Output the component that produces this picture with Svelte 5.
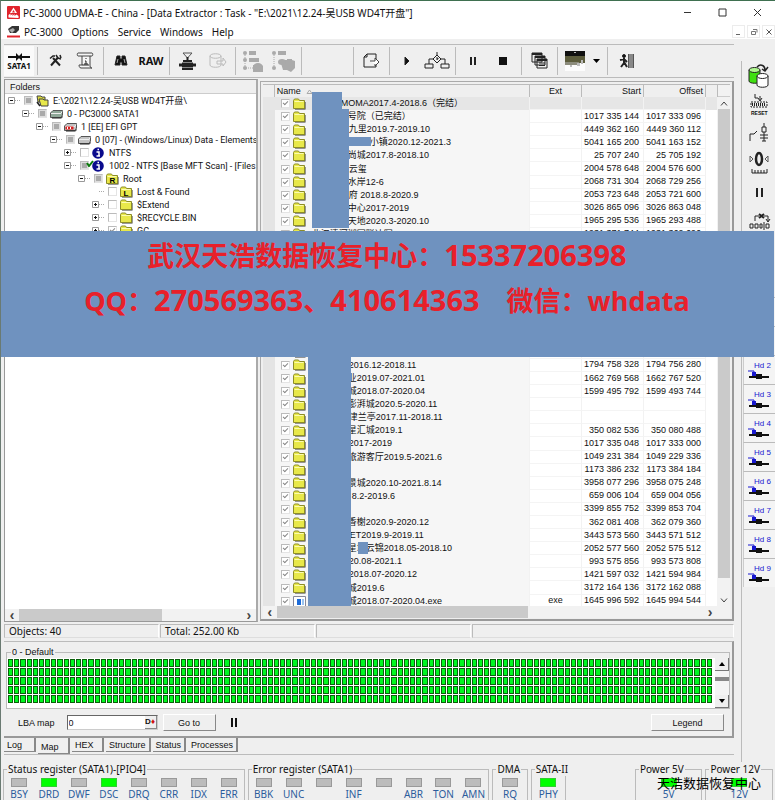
<script>
    const menus = ['PC-3000', 'Options', 'Service', 'Windows', 'Help'];

    const tree = [
        { level: 0, open: true, check: 'part', icon: 'stack', text: 'E:\\2021\\12.24-吴USB WD4T开盘\\' },
        { level: 1, open: true, check: 'part', icon: 'disk', text: '0 - PC3000 SATA1' },
        { level: 2, open: true, check: 'part', icon: 'gpt', text: '1 [EE] EFI GPT' },
        { level: 3, open: true, check: 'part', icon: 'drive', text: '0 [07] - (Windows/Linux) Data - Elements' },
        { level: 4, open: false, check: 'off', icon: 'info', text: 'NTFS' },
        { level: 4, open: true, check: 'part', icon: 'info', text: '1002 - NTFS [Base MFT Scan] - [Files -', mark: true },
        { level: 5, open: true, check: 'part', icon: 'folder', letter: 'R', text: 'Root' },
        { level: 6, open: null, check: 'off', icon: 'folder', letter: 'L', text: 'Lost & Found' },
        { level: 6, open: false, check: 'off', icon: 'folder', text: '$Extend' },
        { level: 6, open: false, check: 'off', icon: 'folder', text: '$RECYCLE.BIN' },
        { level: 6, open: false, check: 'on', icon: 'folder', text: 'GC' }
    ];

    // skip = width of the hidden part of the name
    const files = [
        { skip: 29, name: 'MOMA2017.4-2018.6（完结）', start: '', offset: '' },
        { skip: 36, name: '号院（已完结）', start: '1017 335 144', offset: '1017 333 096' },
        { skip: 37, name: '九里2019.7-2019.10', start: '4449 362 160', offset: '4449 360 112' },
        { skip: 58, name: '小镇2020.12-2021.3', start: '5041 165 200', offset: '5041 163 152' },
        { skip: 36, name: '尚城2017.8-2018.10', start: '25 707 240', offset: '25 705 192' },
        { skip: 37, name: '云玺', start: '2004 578 648', offset: '2004 576 600' },
        { skip: 36, name: '水岸12-6', start: '2068 731 304', offset: '2068 729 256' },
        { skip: 37, name: '府 2018.8-2020.9', start: '2053 723 648', offset: '2053 721 600' },
        { skip: 36, name: '中心2017-2019', start: '3026 865 096', offset: '3026 863 048' },
        { skip: 36, name: '天地2020.3-2020.10', start: '1965 295 536', offset: '1965 293 488' },
        { skip: 0, name: '北汉清河湖园联达写2018.10-2019.10', start: '1931 371 744', offset: '1931 369 696' },
        ...Array.from({ length: 9 }, () => ({ skip: 0, name: '', start: '', offset: '' })),
        { skip: 37, name: '2016.12-2018.11', start: '1794 758 328', offset: '1794 756 280' },
        { skip: 36, name: '业2019.07-2021.01', start: '1662 769 568', offset: '1662 767 520' },
        { skip: 36, name: '城2018.07-2020.04', start: '1599 495 792', offset: '1599 493 744' },
        { skip: 36, name: '澎湃城2020.5-2020.11', start: '', offset: '' },
        { skip: 37, name: '津兰亭2017.11-2018.11', start: '', offset: '' },
        { skip: 36, name: '星汇城2019.1', start: '350 082 536', offset: '350 080 488' },
        { skip: 37, name: '2017-2019', start: '1017 335 048', offset: '1017 333 000' },
        { skip: 36, name: '旅游客厅2019.5-2021.6', start: '1049 231 384', offset: '1049 229 336' },
        { skip: 36, name: '', start: '1173 386 232', offset: '1173 384 184' },
        { skip: 36, name: '景城2020.10-2021.8.14', start: '3958 077 296', offset: '3958 075 248' },
        { skip: 40, name: '8.2-2019.6', start: '659 006 104', offset: '659 004 056' },
        { skip: 36, name: '', start: '3399 855 752', offset: '3399 853 704' },
        { skip: 36, name: '香榭2020.9-2020.12', start: '362 081 408', offset: '362 079 360' },
        { skip: 38, name: 'ET2019.9-2019.11', start: '3443 573 560', offset: '3443 571 512' },
        { skip: 36, name: '星城云锦2018.05-2018.10', start: '2052 577 560', offset: '2052 575 512' },
        { skip: 37, name: '20.08-2021.1', start: '993 575 856', offset: '993 573 808' },
        { skip: 37, name: '2018.07-2020.12', start: '1421 597 032', offset: '1421 594 984' },
        { skip: 36, name: '城2019.6', start: '3172 164 136', offset: '3172 162 088' },
        { skip: 36, name: '城2018.07-2020.04.exe', ext: 'exe', start: '1645 996 592', offset: '1645 994 544' }
    ];

    const cells = Array(114 * 5).fill(0);
    const tabs = ['Log', 'Map', 'HEX', 'Structure', 'Status', 'Processes'];
    let activeTab = $state('Map');
    let lba = $state('0');

    const heads = ['Hd 0', 'Hd 1', 'Hd 2', 'Hd 3', 'Hd 4', 'Hd 5', 'Hd 6', 'Hd 7', 'Hd 8', 'Hd 9'];
    const sideTools = ['copy', 'reset', 'power', 'zero', 'pause', 'bus', 'blank', 'blank'];

    const statusBits = ['BSY', 'DRD', 'DWF', 'DSC', 'DRQ', 'CRR', 'IDX', 'ERR'];
    const errorBits = ['BBK', 'UNC', '', 'INF', '', 'ABR', 'TON', 'AMN'];
    const lit = ['DRD', 'DSC', 'PHY', '5V', '12V'];
</script>

{#snippet logo()}
    <svg width="13" height="13" viewBox="0 0 13 13">
        <rect width="13" height="13" rx="1" fill="#e0242c" />
        <path d="M6.5 1.5 10 7H3z" fill="#fff" />
        <path d="M6.5 4 8 6.4H5z" fill="#e0242c" />
        <path d="M1.5 11.500V9l2-1.500v2l2-1.500v2l2-2v2l2-1.500 2 1.500v2z" fill="#fff" />
    </svg>
{/snippet}

{#snippet folder(letter)}
    <svg width="13" height="12" viewBox="0 0 13 12">
        <path d="M2 4h10.500v7.500H2z" fill="#333" />
        <path d="M.5 10.500V2.500l1-1.500h4l1 1.500h5v8z" fill="#e8e84a" stroke="#8c8c28" />
        <path d="M1.500 3.500h9" stroke="#fbfbb0" />
        {#if letter}
            <text x="3.500" y="9.500" font-size="8" font-weight="bold" font-family="Liberation Sans, sans-serif">{letter}</text>
        {/if}
    </svg>
{/snippet}

{#snippet treeIcon(kind, letter)}
    {#if kind === 'folder'}
        {@render folder(letter)}
    {:else if kind === 'stack'}
        <svg width="13" height="12" viewBox="0 0 13 12">
            <path d="M1 1h4l1 1h3v5H2z" fill="#d8d83c" stroke="#444" />
            <path d="M3 4h4l1 1h4v6H5z" fill="#e8e84a" stroke="#444" />
            <path d="M1 7l3 4" stroke="#222" stroke-width="1.500" />
        </svg>
    {:else if kind === 'info'}
        <svg width="12" height="12" viewBox="0 0 12 12">
            <circle cx="6" cy="6" r="5.800" fill="#0a0a8c" />
            <path d="M4.500 5H7v4h1M4.500 9H8M5.500 2.500H7" stroke="#fff" stroke-width="1.500" fill="none" />
        </svg>
    {:else}
        <svg width="13" height="10" viewBox="0 0 13 10">
            <path d="M.5 4 3 1.500h9.500V6L11 8.500H.5z" fill={kind === 'disk' ? '#8fa898' : '#c4c4c4'} stroke="#555" />
            <path d="M1 4.500h10l1-2" stroke="#eee" fill="none" />
            <path d="M2 9h9.500l1-1.500" stroke="#222" fill="none" />
            {#if kind === 'gpt'}
                <path d="M1.500 4.500h8v3h-8z" fill="#d82020" />
                <path d="M3.500 5v2M6.500 5v2" stroke="#fff" />
            {/if}
        </svg>
    {/if}
{/snippet}

{#snippet barIcon(kind)}
    <svg width="26" height="26" viewBox="0 0 26 26" fill="none" stroke="#222">
        {#if kind === 'tools'}
            <path d="M9 17.500 16 9.500M11 10l7 7.500" stroke-width="2" />
            <path d="M8 10.500l3-2.500h2M14 7l2 3 3 1M18 7l1 3" stroke-width="1.500" />
        {:else if kind === 'script'}
            <path d="M6 5h14c1 0 1 3 0 3h-2v10c0 2 2 2 2 2H9c-2 0-2-3-2-3h3V8H6c-1 0-1-3 0-3zM10 8h8" fill="#f6f6f6" stroke="#444" />
            <path d="M10 17h7M14 10v1M13 13h1v3M12 16h4" />
        {:else if kind === 'find'}
            <path d="M9 8h3v3h2V8h3l2 9h-5v-3h-2v3H7z" fill="#111" />
            <path d="M10 11l-1 4M16 11l1 4" stroke="#aaa" />
        {:else if kind === 'press'}
            <path d="M9 5h9l-4.500 5z" stroke="#555" />
            <path d="M13.500 9v5M9 13h9" stroke-width="2" />
            <path d="M5 17h17" stroke-width="3" />
            <path d="M8 17h11" stroke-width="5" />
            <path d="M8 21h11" stroke-width="2" />
        {:else if kind === 'cyl'}
            <path d="M6 8c0-3 11-3 11 0v9c0 3-11 3-11 0zM6 8c0 3 11 3 11 0M13 13h6v-3l3 4-3 4v-2h-6z" stroke="#bbb" />
        {:else if kind === 'tree1'}
            <g fill="#aaa" stroke="none">
                <circle cx="5" cy="5" r="2" /><circle cx="5" cy="12" r="2" /><circle cx="5" cy="20" r="2" />
                <path d="M9 3h7v4H9zM9 10h10v4H9zM13 17h6l4 1v6H13z" />
                <ellipse cx="18" cy="19" rx="5" ry="4" />
            </g>
            <path d="M5 5v15h8" stroke="#aaa" stroke-dasharray="1 1" />
        {:else if kind === 'tree2'}
            <g fill="#aaa" stroke="none">
                <circle cx="4" cy="5" r="2" /><path d="M8 3h8v4H8z" />
                <circle cx="4" cy="20" r="2" />
                <path d="M10 12h7v-1h5v1l3 1v7l-4 4-4-2h-4z" />
                <ellipse cx="12" cy="14" rx="4" ry="3" />
            </g>
            <path d="M4 5v15" stroke="#aaa" stroke-dasharray="1 1" />
        {:else if kind === 'export'}
            <path d="M18 12V6h-9L6 9v10h12v-3M9 6v3H6" />
            <path d="M12 13h5v-3l4 4-4 4v-2" stroke="#444" fill="#fff" />
        {:else if kind === 'play'}
            <path d="M11 9v8l4-4z" fill="#111" />
        {:else if kind === 'flow'}
            <path d="M13 4v3M13 7l4 4-4 4-4-4zM9 11H5v5M17 11h4v5M1 16h8v4H1zM17 16h8v4h-8z" />
            <path d="M12 10h2v1h-1v1" />
        {:else if kind === 'pause'}
            <path d="M11 9v8M15 9v8" stroke-width="2" />
        {:else if kind === 'stop'}
            <path d="M9 9h8v8H9z" fill="#111" stroke="none" />
        {:else if kind === 'windows'}
            <path d="M6 5h10v9H6zM9 8h10v9H9zM11 11h10v9H11z" fill="#eee" />
            <path d="M6 6h10M9 9h10M11 12h10" stroke-width="2" />
            <path d="M13 15h6M13 17.500h6" />
        {:else if kind === 'picture'}
            <g stroke="none">
                <path d="M3 3h20v20H3z" fill="#fcfcfc" />
                <path d="M3 3h20v6H3z" fill="#111" />
                <path d="M3 8h20v7H3z" fill="#5c5c3c" />
                <path d="M3 14h14v3H3z" fill="#8c8c7c" />
                <path d="M12 4h2v1h-2zM19 12h2v4h-2zM8 17h2v2H8zM15 15h3v3h-3z" fill="#bbb" />
            </g>
        {:else if kind === 'exit'}
            <path d="M17 6h4v14h-4z" fill="#888" stroke="none" />
            <path d="M16.500 6v14M21.500 6v14" stroke="#555" />
            <circle cx="12" cy="8" r="1.500" fill="#111" />
            <path d="M12 10v5l-3 4M12 14l3 5M8 12l4-1 3 3" stroke-width="2" />
        {/if}
    </svg>
{/snippet}

{#snippet tool(kind, label)}
    <button class="tool" aria-label={label}>{@render barIcon(kind)}</button>
{/snippet}

{#snippet sideIcon(kind)}
    <svg width="26" height="26" viewBox="0 0 26 26" fill="none" stroke="#222">
        {#if kind === 'copy'}
            <path d="M3 7v11c0 3 11 3 11 0V7" fill="#3fe010" />
            <ellipse cx="8.500" cy="7" rx="5.500" ry="2.500" fill="#b0f890" />
            <path d="M11 13v9c0 3 11 3 11 0v-9" fill="#fff" />
            <ellipse cx="16.500" cy="13" rx="5.500" ry="2.500" fill="#fff" />
            <path d="M11 4c4-4 8-1 8 3M16 6l3 2 3-4" stroke-width="1.500" />
        {:else if kind === 'reset'}
            <path d="M9 2v4h3M14 4v4M12 6l2 3 2-3" />
            <path d="M5 10h16v5H5z" stroke-dasharray="2 1" />
            <path d="M6 12.500h14" stroke-width="3" stroke-dasharray="1 1" />
            <text x="5" y="23" font-size="5" font-weight="bold" font-family="Liberation Sans, sans-serif" fill="#111" stroke="none">RESET</text>
        {:else if kind === 'power'}
            <path d="M18 2v4M16 6h4v5h-4zM18 11v9M14 14h8M14 17h8M16 20h4M4 20v-7h4l3-3" />
        {:else if kind === 'zero'}
            <ellipse cx="13" cy="9" rx="3" ry="6" stroke-width="2.500" />
            <path d="M4 6v6l3-3zM22 6v6l-3-3z" stroke="#555" />
            <path d="M6 19v4h15v-4M9 20v3M12 20v3M15 20v3M18 20v3" />
        {:else if kind === 'pause'}
            <path d="M11 9v9M16 9v9" stroke-width="2" />
        {:else if kind === 'bus'}
            <path d="M9 13V8h4M18 8h4v5M20 11l2 3 2-3" />
            <path d="M13 6l5 4M18 6l-5 4" stroke-width="2" />
            <path d="M4 16h3v4H4zM9 16h3v4H9zM14 16h2v4h-2zM20 16h3v4h-3zM18 14v8" />
        {/if}
    </svg>
{/snippet}

{#snippet led(name)}
    <div class="led-item">
        <span class="led" class:on={lit.includes(name)}></span>
        <span class="led-name">{name}</span>
    </div>
{/snippet}

<div class="window">
    <header class="titlebar">
        {@render logo()}
        <span class="title">PC-3000 UDMA-E - China - [Data Extractor : Task - "E:\2021\12.24-吴USB WD4T开盘"]</span>
        <div class="win-buttons">
            <button aria-label="Minimize"><svg width="9" height="9"><path d="M1 4.500h7" stroke="#333" /></svg></button>
            <button aria-label="Maximize"><svg width="9" height="9"><path d="M1 1h7v7H1z" fill="none" stroke="#333" /></svg></button>
            <button aria-label="Close"><svg width="9" height="9"><path d="M1 1l7 7M8 1l-7 7" stroke="#333" /></svg></button>
        </div>
    </header>

    <nav class="menubar">
        <svg width="13" height="13" viewBox="0 0 13 13">
            <path d="M1 4l4-3h7v4l-3 3H3z" fill="#333" />
            <path d="M2 5l4-2 2 2-3 3z" fill="#aaa" />
            <path d="M0 11.500h13" stroke="#e0242c" stroke-width="2" />
        </svg>
        {#each menus as menu}
            <button>{menu}</button>
        {/each}
        <div class="mdi-buttons">
            <button aria-label="Minimize child"><svg width="8" height="8"><path d="M1 6.500h4" stroke="#666" /></svg></button>
            <button aria-label="Restore child"><svg width="8" height="8"><path d="M3 1.500h4v3M1.500 3.500h4v3h-4z" fill="none" stroke="#777" /></svg></button>
            <button aria-label="Close child"><svg width="8" height="8"><path d="M1.500 1.500l5 5M6.500 1.500l-5 5" stroke="#555" /></svg></button>
        </div>
    </nav>

    <div class="workspace">
        <div class="main">
            <div class="toolbar">
                <button class="tool pressed">
                    <svg width="22" height="10" viewBox="0 0 22 10">
                        <path d="M0 5h22" stroke="#111" stroke-width="2" />
                        <path d="M8 1v8l4-4zM14 1v8l-4-4z" fill="#111" />
                    </svg>
                    <b>SATA1</b>
                </button>
                <i class="sep"></i>
                {@render tool('tools', 'Tools')}
                {@render tool('script', 'Script')}
                <i class="sep"></i>
                {@render tool('find', 'Find')}
                <button class="tool raw"><b>RAW</b></button>
                <i class="sep"></i>
                {@render tool('press', 'Compress')}
                {@render tool('cyl', 'Copy disk')}
                <i class="sep"></i>
                {@render tool('tree1', 'Expand')}
                {@render tool('tree2', 'Collapse')}
                <i class="sep"></i>
                <i class="space"></i>
                <i class="sep"></i>
                {@render tool('export', 'Export')}
                <i class="sep"></i>
                {@render tool('play', 'Start')}
                {@render tool('flow', 'Scheme')}
                <i class="sep"></i>
                {@render tool('pause', 'Pause')}
                {@render tool('stop', 'Stop')}
                <i class="sep"></i>
                {@render tool('windows', 'Windows')}
                <i class="sep"></i>
                {@render tool('picture', 'Map view')}
                <button class="caret" aria-label="Map view options"><svg width="8" height="4"><path d="M0 0h7L3.500 4z" /></svg></button>
                <i class="sep"></i>
                {@render tool('exit', 'Exit')}
            </div>

            <div class="panels">
                <section class="folders">
                    <h2>Folders</h2>
                    <ul>
                        {#each tree as node}
                            <li style:padding-left="{3 + node.level * 14}px">
                                {#if node.open === null}
                                    <span class="toggle none"></span>
                                {:else}
                                    <button class="toggle" aria-label="Toggle {node.text}">
                                        <svg width="7" height="7"><path d="M.5.5h6v6h-6z" fill="#fff" stroke="#999" /><path d={node.open ? 'M2 3.500h3' : 'M2 3.500h3M3.500 2v3'} stroke="#111" /></svg>
                                    </button>
                                {/if}
                                <i class="dots"></i>
                                <label>
                                    <input type="checkbox" class={node.check} checked={node.check === 'on'} />
                                    {#if node.mark}
                                        <svg class="mark" width="8" height="7"><path d="M1 3l2 3 4-5" fill="none" stroke="#0a7a0a" stroke-width="2" /></svg>
                                    {/if}
                                    <span class="icon">{@render treeIcon(node.icon, node.letter)}</span>
                                    <span>{node.text}</span>
                                </label>
                            </li>
                        {/each}
                    </ul>
                    <div class="hscroll">
                        <button aria-label="Scroll left">‹</button>
                        <div class="track"><div class="thumb tree-thumb"></div></div>
                        <button aria-label="Scroll right">›</button>
                    </div>
                </section>

                <section class="files">
                    <div class="files-body">
                        <div class="clip">
                            <table>
                                <colgroup>
                                    <col class="c-gutter" /><col /><col class="c-ext" /><col class="c-num" /><col class="c-num" /><col class="c-rest" />
                                </colgroup>
                                <thead>
                                    <tr>
                                        <th></th>
                                        <th class="left">Name <svg width="7" height="5"><path d="M1 4.500 3.500 1 6 4.500z" fill="none" stroke="#aaa" /></svg></th>
                                        <th>Ext</th>
                                        <th class="right">Start</th>
                                        <th class="right">Offset</th>
                                        <th></th>
                                    </tr>
                                </thead>
                                <tbody>
                                    {#each files as file, i}
                                        <tr class:current={i === 0}>
                                            <td class="gutter"></td>
                                            <td class="name">
                                                <label>
                                                    <input type="checkbox" class="on" checked />
                                                    {#if file.ext}
                                                        <svg class="file-icon" width="13" height="12"><path d="M.5 1.500h12v10H.5z" fill="#fff" stroke="#889" /><path d="M4 4h4v6H4z" fill="#1c6ad8" /><path d="M9 4h2v6H9z" fill="#9cc4f0" /></svg>
                                                    {:else}
                                                        <span class="file-icon">{@render folder()}</span>
                                                    {/if}
                                                    <i style:width="{file.skip}px"></i>
                                                    <span>{file.name}</span>
                                                </label>
                                            </td>
                                            <td class="ext">{file.ext ?? ''}</td>
                                            <td class="num">{file.start}</td>
                                            <td class="num">{file.offset}</td>
                                            <td></td>
                                        </tr>
                                    {/each}
                                </tbody>
                            </table>
                            <div class="mask mask-head"></div>
                            <div class="mask mask-top"></div>
                            <div class="mask mask-bar"></div>
                            <div class="mask mask-low"></div>
                            <div class="mask mask-dot"></div>
                        </div>
                        <div class="vscroll">
                            <i class="cap"></i>
                            <button aria-label="Scroll up"><svg width="8" height="5"><path d="M1 4.500 4 1l3 3.500" /></svg></button>
                            <div class="vthumb"></div>
                            <button aria-label="Scroll down"><svg width="8" height="5"><path d="M1 .5 4 4 7 .5" /></svg></button>
                        </div>
                    </div>
                    <div class="hscroll">
                        <button aria-label="Scroll left">‹</button>
                        <div class="track"><div class="thumb file-thumb"></div></div>
                        <button aria-label="Scroll right">›</button>
                        <i class="corner"></i>
                    </div>
                </section>
            </div>

            <footer class="statusbar">
                <span>Objects: 40</span>
                <span>Total: 252.00 Kb</span>
                <span></span>
                <span class="wide"></span>
            </footer>

            <section class="map">
                <fieldset>
                    <legend>0 - Default</legend>
                    <div class="map-body">
                        <div class="cells">
                            {#each cells as _}<i></i>{/each}
                        </div>
                        <div class="map-scroll">
                            <button aria-label="Map up"><svg width="6" height="4"><path d="M0 4h6L3 0z" /></svg></button>
                            <div class="map-thumb"></div>
                            <button aria-label="Map down"><svg width="6" height="4"><path d="M0 0h6L3 4z" /></svg></button>
                        </div>
                    </div>
                </fieldset>
                <div class="map-tools">
                    <label for="lba">LBA map</label>
                    <div class="lba-box">
                        <input id="lba" bind:value={lba} />
                        <button aria-label="Number base">D<em>♦</em></button>
                    </div>
                    <button class="btn goto">Go to</button>
                    <button class="pause" aria-label="Pause map"><svg width="8" height="9"><path d="M2 0v9M6 0v9" stroke="#111" stroke-width="2" /></svg></button>
                    <button class="btn legend">Legend</button>
                </div>
            </section>

            <div class="tabs">
                {#each tabs as tab}
                    <button class:active={tab === activeTab} onclick={() => (activeTab = tab)}>{tab}</button>
                {/each}
            </div>
        </div>

        <aside class="side">
            {#each sideTools as kind}
                <button aria-label={kind}>{@render sideIcon(kind)}</button>
            {/each}
            <i class="gap"></i>
            {#each heads as head}
                <button class="head">
                    <span>{head}</span>
                    <svg width="22" height="10" viewBox="0 0 22 10">
                        <path d="M0 1h6v4" stroke="#1818d0" fill="none" />
                        <path d="M4 2h4v4H4z" fill="#1818d0" />
                        <path d="M1 7h20" stroke="#111" stroke-width="2" />
                        <path d="M8 4h6v5H8z" fill="#111" />
                    </svg>
                </button>
            {/each}
        </aside>
    </div>

    <div class="registers">
        <fieldset class="eight">
            <legend>Status register (SATA1)-[PIO4]</legend>
            {#each statusBits as bit}{@render led(bit)}{/each}
        </fieldset>
        <fieldset class="eight">
            <legend>Error register (SATA1)</legend>
            {#each errorBits as bit}{@render led(bit)}{/each}
        </fieldset>
        <fieldset class="one">
            <legend>DMA</legend>
            {@render led('RQ')}
        </fieldset>
        <fieldset class="one">
            <legend>SATA-II</legend>
            {@render led('PHY')}
        </fieldset>
        <fieldset class="volt first">
            <legend>Power 5V</legend>
            {@render led('5V')}
        </fieldset>
        <fieldset class="volt">
            <legend>Power 12V</legend>
            {@render led('12V')}
        </fieldset>
        <div class="watermark">天浩数据恢复中心</div>
    </div>

    <div class="banner">
        <p>武汉天浩数据恢复中心：<b>15337206398</b></p>
        <p><b class="word">QQ</b>：<b>270569363</b>、<b>410614363</b><span>微信</span>：<b class="word">whdata</b></p>
    </div>
</div>

<style>
    :global(body) {
        margin: 0;
    }

    .window {
        position: relative;
        box-sizing: border-box;
        display: flex;
        flex-direction: column;
        height: 100vh;
        min-height: 560px;
        overflow: hidden;
        border-top: 1px solid #3f7050;
        border-left: 1px solid #6a7a72;
        background: #efefef;
        color: #111;
        font: 9px/12px "Liberation Sans", "Noto Sans CJK SC", sans-serif;
    }

    .window :is(button, input) {
        font: inherit;
        color: inherit;
        margin: 0;
        padding: 0;
        border: 0;
        background: none;
    }

    .window svg {
        display: block;
        flex: none;
    }

    .titlebar,
    .menubar {
        display: flex;
        align-items: center;
        background: #fff;
        padding-left: 6px;
        font: 10px/14px "Noto Sans", "Noto Sans CJK SC", sans-serif;
    }

    .titlebar {
        height: 23px;
        gap: 3px;
        white-space: nowrap;
    }

    .win-buttons {
        display: flex;
        margin-left: auto;
    }

    .win-buttons button {
        width: 35px;
        display: flex;
        justify-content: center;
    }

    .menubar {
        height: 15px;
    }

    .menubar > button {
        margin-left: 4px;
        margin-right: 5px;
    }

    .mdi-buttons {
        display: flex;
        gap: 2px;
        margin-left: auto;
    }

    .mdi-buttons button {
        width: 13px;
        height: 13px;
        display: flex;
        align-items: center;
        justify-content: center;
        border: 1px solid #ececec;
    }

    .workspace {
        flex: 1;
        min-height: 0;
        display: flex;
    }

    .main {
        flex: 1;
        min-width: 0;
        display: flex;
        flex-direction: column;
        padding: 5px 7px 0 3px;
    }

    .toolbar {
        height: 32px;
        display: flex;
        align-items: center;
        border-top: 1px solid #bbb;
        border-bottom: 1px solid #bbb;
    }

    .tool {
        flex: none;
        width: 30px;
        height: 30px;
        display: flex;
        flex-direction: column;
        align-items: center;
        justify-content: center;
    }

    .window .pressed {
        background: #fafafa;
        font: 8px/8px "Noto Sans", sans-serif;
    }

    .raw b {
        font: bold 11px/12px "Noto Sans", sans-serif;
    }

    .sep {
        flex: none;
        width: 1px;
        height: 28px;
        margin: 0 2px 0 3px;
        background: #bbb;
    }

    .space {
        width: 46px;
    }

    .caret {
        width: 14px;
        display: flex;
        justify-content: center;
    }

    .panels {
        flex: 1;
        min-height: 0;
        display: flex;
        gap: 2px;
        margin-top: 1px;
    }

    .folders {
        flex: 254 1 0;
        min-width: 0;
        display: flex;
        flex-direction: column;
        border: 1px solid #999;
        border-right: 2px solid #aaa;
        background: #fff;
        box-sizing: border-box;
    }

    .folders h2 {
        margin: 0;
        padding-left: 5px;
        height: 13px;
        line-height: 14px;
        font-size: 9px;
        font-weight: normal;
        background: #efefef;
        border-bottom: 1px solid #ccc;
    }

    .folders ul {
        flex: 1;
        min-height: 0;
        overflow: hidden;
        list-style: none;
        margin: 0;
        padding: 0;
        font-family: Roboto, "Noto Sans CJK SC", sans-serif;
    }

    .folders li {
        height: 13px;
        display: flex;
        align-items: center;
        white-space: nowrap;
    }

    .toggle {
        width: 7px;
        height: 7px;
        flex: none;
    }

    .dots {
        width: 5px;
        margin-right: 4px;
        border-top: 1px dotted #aaa;
        flex: none;
    }

    label {
        display: flex;
        align-items: center;
    }

    .folders label {
        position: relative;
    }

    .window input[type='checkbox'] {
        appearance: none;
        box-sizing: border-box;
        flex: none;
        width: 9px;
        height: 9px;
        background: #fff;
        border: 1px solid #bbb;
        border-right-color: #e4e4e4;
        border-bottom-color: #e4e4e4;
    }

    .window input.part {
        background: #aaa;
        box-shadow: inset 0 0 0 1px #ddd;
    }

    input.on::after {
        content: '';
        display: block;
        width: 4px;
        height: 2px;
        margin: 1px;
        border-left: 1px solid #888;
        border-bottom: 1px solid #888;
        rotate: -45deg;
    }

    .mark {
        position: absolute;
        left: 6px;
        top: 0;
    }

    .icon {
        width: 13px;
        margin: 0 4px 0 3px;
        flex: none;
    }

    .hscroll {
        flex: none;
        height: 12px;
        display: flex;
        background: #f2f2f2;
    }

    .hscroll button {
        width: 14px;
        flex: none;
        font: bold 14px/9px "Liberation Sans", sans-serif;
        color: #444;
    }

    .track {
        flex: 1;
    }

    .thumb {
        height: 100%;
        background: #cacaca;
    }

    .tree-thumb {
        width: 64%;
    }

    .file-thumb {
        width: 59%;
    }

    .corner {
        width: 13px;
    }

    .files {
        flex: 473 1 0;
        min-width: 0;
        box-sizing: border-box;
        display: flex;
        flex-direction: column;
        margin: 2px 0 1px;
        padding: 2px 2px 1px;
        border: 1px solid #aaa;
        border-right: 2px solid #999;
        border-bottom: 2px solid #999;
    }

    .files-body {
        flex: 1;
        min-height: 0;
        display: flex;
    }

    .clip {
        position: relative;
        flex: 1;
        min-width: 0;
        overflow: hidden;
        background: #fff;
    }

    table {
        width: 100%;
        height: 524px;
        table-layout: fixed;
        border-collapse: separate;
        border-spacing: 0;
    }

    .c-gutter {
        width: 12px;
    }

    .c-ext {
        width: 52px;
    }

    .c-num {
        width: 62px;
    }

    .c-rest {
        width: 12px;
    }

    th,
    td {
        box-sizing: border-box;
        height: 13px;
        padding: 0;
        line-height: 11px;
        white-space: nowrap;
        overflow: hidden;
        border-right: 1px solid #f2f2f2;
    }

    th {
        font-weight: normal;
        background: #efefef;
        border-top: 1px solid #bbb;
        border-right: 1px solid #bbb;
    }

    .window th svg {
        display: inline-block;
        margin-left: 3px;
    }

    .left {
        text-align: left;
        padding-left: 2px;
    }

    .right {
        text-align: right;
        padding-right: 2px;
    }

    .gutter {
        background: #e4e4e4;
        border-right: 0;
    }

    .name {
        background: #f6f6f6;
        padding-left: 6px;
    }

    .name label {
        height: 12px;
    }

    .current td {
        background: #e6e6e6;
    }

    .file-icon {
        margin: 0 1px 0 3px;
    }

    .name i {
        flex: none;
    }

    .name label > span:last-child {
        padding-left: 5px;
    }

    .ext {
        text-align: center;
        border-bottom: 1px solid #f4f4f4;
    }

    .num {
        text-align: right;
        padding-right: 4px;
        border-bottom: 1px solid #f4f4f4;
    }

    .mask {
        position: absolute;
        background: #6f92bf;
    }

    .mask-head {
        left: 49px;
        top: 8px;
        width: 30px;
        height: 17px;
    }

    .mask-top {
        left: 49px;
        top: 25px;
        width: 37px;
        height: 119px;
    }

    .mask-bar {
        left: 80px;
        top: 53px;
        width: 28px;
        height: 9px;
    }

    .mask-low {
        left: 45px;
        top: 270px;
        width: 43px;
        bottom: 0;
    }

    .mask-dot {
        left: 95px;
        top: 458px;
        width: 10px;
        height: 12px;
    }

    .vscroll {
        width: 12px;
        flex: none;
        display: flex;
        flex-direction: column;
        background: #f2f2f2;
    }

    .cap {
        height: 11px;
        border-top: 1px solid #bbb;
        border-bottom: 1px solid #ccc;
    }

    .vscroll button {
        height: 12px;
        display: flex;
        align-items: center;
        justify-content: center;
    }

    .vscroll path {
        fill: none;
        stroke: #444;
    }

    .vthumb {
        flex: 1;
        margin-bottom: 16px;
        background: #cacaca;
    }

    .statusbar {
        display: flex;
        gap: 1px;
        height: 14px;
        margin-top: 2px;
        font: 10px/13px "Noto Sans", sans-serif;
    }

    .statusbar span {
        flex: 155 1 0;
        box-sizing: border-box;
        padding-left: 4px;
        border: 1px solid #bbb;
        border-right-color: #fff;
        border-bottom-color: #ddd;
    }

    .statusbar .wide {
        flex-grow: 266;
    }

    .map {
        margin-top: 3px;
        padding: 4px 2px 0 2px;
        border-top: 1px solid #bbb;
        border-right: 2px solid #999;
        border-bottom: 2px solid #999;
    }

    fieldset {
        margin: 0;
        padding: 0;
        border: 1px solid #bbb;
        min-width: 0;
    }

    legend {
        padding: 0 1px;
    }

    .map legend {
        margin-left: 4px;
        height: 12px;
    }

    .map-body {
        display: flex;
        background: #fff;
        height: 50px;
    }

    .cells {
        flex: 1;
        display: grid;
        grid-template-columns: repeat(114, 1fr);
        grid-template-rows: repeat(5, 1fr);
        column-gap: 1px;
        row-gap: 1px;
        padding: 1px 3px 5px 1px;
    }

    .cells i {
        background: #00f820;
        border: 1px solid #0a600a;
    }

    .map-scroll {
        width: 14px;
        display: flex;
        flex-direction: column;
        background: #f4f4f4;
    }

    .map-scroll button {
        height: 13px;
        display: flex;
        align-items: center;
        justify-content: center;
        background: #efefef;
        border-right: 1px solid #777;
        border-bottom: 1px solid #777;
    }

    .map-thumb {
        height: 4px;
        margin: 6px 0 auto;
        background: #888;
    }

    .map-tools {
        display: flex;
        align-items: center;
        height: 27px;
        padding: 0 6px 0 12px;
    }

    .lba-box {
        display: flex;
        width: 91px;
        height: 15px;
        box-sizing: border-box;
        margin-left: 12px;
        background: #fff;
        border: 1px solid #ccc;
        border-top-color: #666;
        border-left-color: #666;
    }

    .lba-box input {
        flex: 1;
        min-width: 0;
        padding-left: 1px;
    }

    .window .lba-box button {
        width: 12px;
        font: bold 8px/12px "Liberation Sans", sans-serif;
        background: #efefef;
        border-right: 1px solid #888;
        border-bottom: 1px solid #888;
    }

    .lba-box em {
        color: #d01010;
        font-style: normal;
    }

    .window .btn {
        height: 17px;
        border: 1px solid #fff;
        border-right: 1px solid #888;
        border-bottom: 1px solid #888;
    }

    .window .goto {
        width: 53px;
        margin-left: 5px;
    }

    .window .pause {
        margin-left: 14px;
    }

    .window .legend {
        width: 73px;
        margin-left: auto;
    }

    .tabs {
        display: flex;
        align-items: flex-start;
        gap: 2px;
        height: 16px;
        border-bottom: 1px solid #bbb;
        margin-bottom: 7px;
    }

    .tabs button {
        height: 14px;
        padding: 0 3px;
        border-right: 2px solid #888;
        border-bottom: 1px solid #888;
    }

    .tabs button:nth-child(-n + 3) {
        width: 32px;
        text-align: left;
    }

    .tabs .active {
        height: 16px;
        padding-top: 2px;
    }

    .side {
        flex: none;
        width: 34px;
        box-sizing: border-box;
        display: flex;
        flex-direction: column;
        margin-top: 22px;
        border-left: 1px solid #bbb;
        align-items: stretch;
    }

    .side button {
        flex: none;
        height: 29px;
        display: flex;
        flex-direction: column;
        align-items: center;
        justify-content: center;
    }

    .side .gap {
        height: 4px;
    }

    .window .head {
        align-items: flex-end;
        padding-right: 4px;
        margin-left: 1px;
        box-sizing: border-box;
        border-top: 1px solid #bbb;
        border-left: 1px solid #ccc;
        background: #f4f4f4;
        color: #1818d0;
        font: 8px/9px "Liberation Sans", sans-serif;
    }

    .head svg {
        margin-right: 1px;
    }

    .registers {
        position: relative;
        flex: none;
        display: flex;
        gap: 3px;
        height: 38px;
        padding: 0 2px;
        font: 10px/12px "Noto Sans", sans-serif;
    }

    .registers fieldset {
        display: flex;
        border-bottom: 0;
        box-sizing: border-box;
    }

    .registers legend {
        margin-left: 3px;
        height: 14px;
        line-height: 14px;
        white-space: nowrap;
    }

    .eight {
        flex: 245 1 0;
    }

    .one {
        flex: 34 1 0;
    }

    .volt {
        flex: 67 1 0;
    }

    .first {
        margin-left: 66px;
    }

    .led-item {
        flex: 1;
        display: flex;
        flex-direction: column;
        align-items: center;
        gap: 1px;
        padding-top: 2px;
    }

    .led {
        box-sizing: border-box;
        width: 16px;
        height: 9px;
        background: #bcbcbc;
        border: 1px solid #999;
    }

    .led.on {
        background: #0f0;
        border-color: #3c3;
    }

    .led-name {
        height: 12px;
        color: #2c5c9c;
    }

    .watermark {
        position: absolute;
        right: 14px;
        top: 12px;
        font: 13px/18px "Noto Sans CJK SC", sans-serif;
        color: #000;
    }

    .banner {
        position: absolute;
        left: -1px;
        right: 1px;
        top: 230px;
        box-sizing: border-box;
        height: 126px;
        padding-top: 1px;
        background: #6f92bf;
        color: #e8202a;
        text-align: center;
        font: bold 27px/45px "Noto Sans CJK SC", sans-serif;
        white-space: nowrap;
    }

    .banner p {
        margin: 0;
    }

    .banner b {
        font-family: "Open Sans", "Noto Sans", sans-serif;
        font-size: 29px;
        font-weight: 700;
    }

    .banner .word {
        font-size: 27px;
    }

    .banner span {
        margin-left: 27px;
    }
</style>
